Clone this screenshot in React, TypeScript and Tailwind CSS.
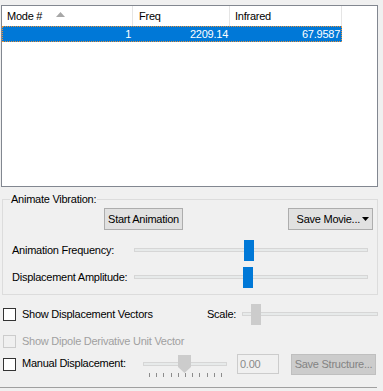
import React from 'react';

const Check = ({ disabled }: { disabled?: boolean }) => (
  <span
    className={
      disabled
        ? 'block w-[13px] h-[13px] shrink-0 border border-[#cccccc] bg-transparent'
        : 'block w-[13px] h-[13px] shrink-0 border border-[#333333] bg-white'
    }
  />
);

const App = () => {
  return (
    <div className="w-[383px] h-[391px] overflow-hidden bg-[#f0f0f0] text-[11px] tracking-[-0.25px] text-black font-['Liberation_Sans',Arial,sans-serif] flex flex-col">
      {/* mode list */}
      <div className="mt-[5px] ml-[1px] w-[377px] h-[182px] shrink-0 border border-[#828790] bg-white">
        <div className="flex h-[20px] leading-[20px]">
          <div className="w-[131px] border-r border-[#e5e5e5] pl-[5px] flex items-center gap-[14px]">
            <span>Mode #</span>
            <svg width="9" height="5" viewBox="0 0 9 5" className="mb-[3px]">
              <path d="M0 5 L4.5 0 L9 5 Z" fill="#a7a7a7" />
            </svg>
          </div>
          <div className="w-[97px] border-r border-[#e5e5e5] pl-[6px]">Freq</div>
          <div className="w-[112px] border-r border-[#e5e5e5] pl-[5px]">Infrared</div>
        </div>
        <div className="flex w-[340px] h-[16px] leading-[14px] bg-[#0078d7] text-white border border-dotted border-[#e6913a]">
          <div className="w-[130px] text-right pr-[2px]">1</div>
          <div className="w-[97px] text-right pr-[2px]">2209.14</div>
          <div className="w-[111px] text-right pr-[1px]">67.9587</div>
        </div>
      </div>

      {/* animate vibration group */}
      <div className="mt-[12px] ml-[2px] w-[376px] h-[96px] shrink-0 border border-[#dcdcdc] flex flex-col">
        <div className="-mt-[7px] ml-[7px] w-fit px-[1px] h-[13px] leading-[13px] bg-[#f0f0f0]">Animate Vibration:</div>
        <div className="mt-[2px] flex justify-between pl-[101px] pr-[4px]">
          <button className="w-[79px] h-[22px] border border-[#adadad] bg-[#e1e1e1] leading-[20px]">Start Animation</button>
          <button className="w-[85px] h-[22px] border border-[#adadad] bg-[#e1e1e1] leading-[20px] flex items-center justify-end pr-[3px] gap-[2px]">
            <span>Save Movie...</span>
            <svg width="7" height="4" viewBox="0 0 7 4">
              <path d="M0 0 H7 L3.5 4 Z" fill="#000" />
            </svg>
          </button>
        </div>
        <div className="mt-[10px] h-[21px] flex items-center pl-[9px]">
          <span className="w-[122px] shrink-0">Animation Frequency:</span>
          <div className="relative w-[234px] h-[21px]">
            <div className="absolute left-0 right-0 top-[8px] h-[4px] border border-[#d6d6d6] bg-[#e7eaea]" />
            <div className="absolute left-[110px] top-0 w-[10px] h-[21px] bg-[#0078d7]" />
          </div>
        </div>
        <div className="mt-[6px] h-[21px] flex items-center pl-[9px]">
          <span className="w-[122px] shrink-0">Displacement Amplitude:</span>
          <div className="relative w-[234px] h-[21px]">
            <div className="absolute left-0 right-0 top-[8px] h-[4px] border border-[#d6d6d6] bg-[#e7eaea]" />
            <div className="absolute left-[109px] top-0 w-[10px] h-[21px] bg-[#0078d7]" />
          </div>
        </div>
      </div>

      {/* options */}
      <div className="mt-[9px] h-[21px] flex items-center pl-[3px] shrink-0">
        <Check />
        <span className="ml-[6px] w-[185px] shrink-0">Show Displacement Vectors</span>
        <span className="w-[35px] shrink-0">Scale:</span>
        <div className="relative w-[136px] h-[21px]">
          <div className="absolute left-0 right-0 top-[8px] h-[4px] border border-[#d6d6d6] bg-[#e7eaea]" />
          <div className="absolute left-[9px] top-0 w-[10px] h-[21px] bg-[#cccccc]" />
        </div>
      </div>

      <div className="mt-[6px] h-[21px] flex items-center pl-[3px] shrink-0 text-[#a0a0a0]">
        <Check disabled />
        <span className="ml-[6px]">Show Dipole Derivative Unit Vector</span>
      </div>

      <div className="mt-[2px] h-[24px] flex items-start pl-[3px] shrink-0">
        <div className="mt-[4px]">
          <Check />
        </div>
        <span className="ml-[6px] w-[121px] shrink-0 mt-[3px] leading-[13px]">Manual Displacement:</span>
        <div className="mt-[1px] w-[84px] shrink-0 flex flex-col">
          <div className="relative h-[18px]">
            <div className="absolute left-0 right-0 top-[7px] h-[4px] border border-[#d6d6d6] bg-[#e7eaea]" />
            <svg width="13" height="18" viewBox="0 0 13 18" className="absolute left-[35px] top-0">
              <path d="M0 0 H13 V12 L6.5 18 L0 12 Z" fill="#cccccc" />
            </svg>
          </div>
          <svg width="84" height="5" viewBox="0 0 84 5">
            {[6, 13, 20, 28, 35, 42, 49, 56, 64, 71, 78].map((x) => (
              <line key={x} x1={x + 0.5} y1="0" x2={x + 0.5} y2="4" stroke="#8c8c8c" strokeWidth="1" />
            ))}
          </svg>
        </div>
        <div className="ml-[10px] w-[42px] h-[20px] shrink-0 border border-[#cccccc] bg-[#f0f0f0] text-[#8a8a8a] pl-[2px] leading-[18px]">
          0.00
        </div>
        <button className="ml-[12px] w-[85px] h-[21px] shrink-0 border border-[#bfbfbf] bg-[#cccccc] text-[#838383] leading-[19px]">
          Save Structure...
        </button>
      </div>

      <div className="mt-[9px] w-[377px] border-t border-[#a0a0a0] shrink-0" />
    </div>
  );
};

export default App;
